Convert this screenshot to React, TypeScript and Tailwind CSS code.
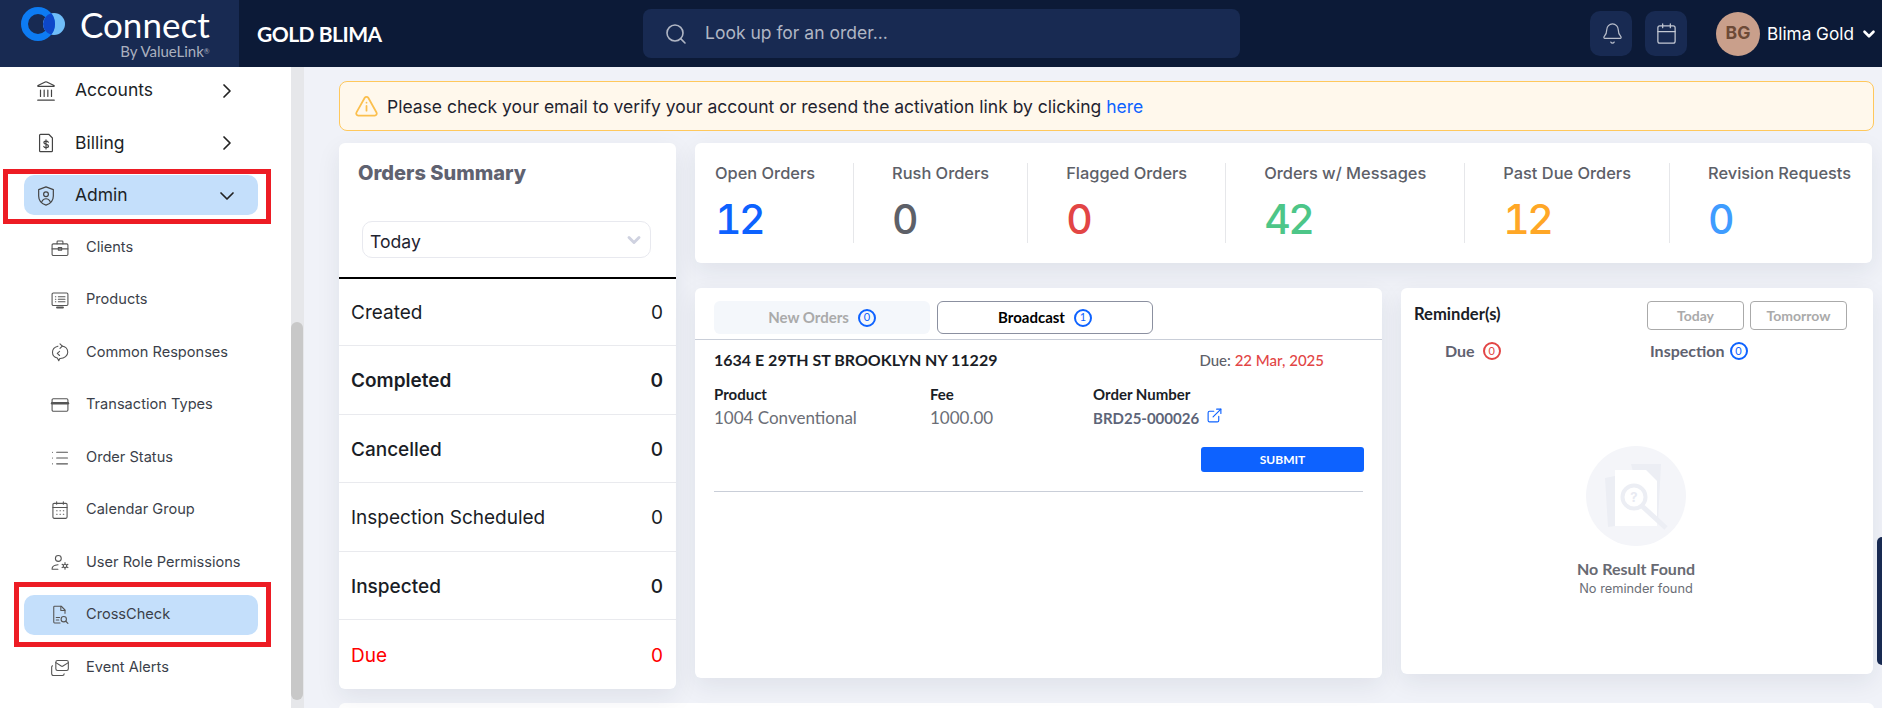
import { Bell, Calendar, ChevronDown, ChevronRight, ExternalLink, Landmark, List, Search, Mails } from "lucide-react";

type IconProps = { className?: string };

// small hand drawn menu icons, the ones the icon package has no close match for
function Svg({ children, className }: IconProps & { children: React.ReactNode }) {
  return (
    <svg viewBox="0 0 24 24" fill="none" stroke="currentColor" strokeWidth="1.3" strokeLinecap="round" strokeLinejoin="round" className={className}>
      {children}
    </svg>
  );
}

const BillingIcon = (p: IconProps) => (
  <Svg {...p}>
    <path d="M6 2.5h9l4 4v14a1 1 0 0 1-1 1H6a1 1 0 0 1-1-1v-17a1 1 0 0 1 1-1z" />
    <path d="M14.5 11.2c-.4-.8-1.3-1.2-2.4-1.2-1.4 0-2.4.7-2.4 1.8 0 2.4 5 1.1 5 3.5 0 1.1-1.1 1.8-2.5 1.800-1.200 0-2.200-.5-2.600-1.300M12 8.500v10" />
  </Svg>
);
const AdminIcon = (p: IconProps) => (
  <Svg {...p}>
    <path d="M12 2l8 3v7c0 5-3.500 8.500-8 10-4.500-1.500-8-5-8-10V5z" />
    <circle cx="12" cy="10" r="2.600" />
    <path d="M7.500 18c1-2 2.700-3 4.500-3s3.500 1 4.500 3" />
  </Svg>
);
const ClientsIcon = (p: IconProps) => (
  <Svg {...p}>
    <rect x="2.500" y="7" width="19" height="14" rx="1.500" />
    <path d="M8.500 7V4.500a1 1 0 0 1 1-1h5a1 1 0 0 1 1 1V7M2.500 13h19" />
    <rect x="10" y="11.500" width="4" height="3" />
  </Svg>
);
const ProductsIcon = (p: IconProps) => (
  <Svg {...p}>
    <rect x="2.500" y="3.500" width="19" height="15" rx="1.500" />
    <path d="M6.500 8h.5M6.500 11h.5M6.500 14h.5M10 8h8M10 11h8M10 14h8" />
    <path d="M8.500 21h7" strokeWidth="2.500" />
  </Svg>
);
const ResponsesIcon = (p: IconProps) => (
  <Svg {...p}>
    <path d="M9.500 3.800C5.800 4.600 3 7.500 3 11c0 3.400 2.500 6.200 5.800 7.100l1.700 3.200 1.300-2.800h.5c5 0 9-3.300 9-7.500 0-3.600-3-6.600-7-7.300" />
    <path d="M12 1l2.800 2.800L12 6.500M11.500 15l-2.800-2.500 2.800-2.500" />
  </Svg>
);
const CardIcon = (p: IconProps) => (
  <Svg {...p}>
    <rect x="2.500" y="4.500" width="19" height="15" rx="1.500" />
    <path d="M2.500 10h19" strokeWidth="3" />
  </Svg>
);
const CalendarGroupIcon = (p: IconProps) => (
  <Svg {...p}>
    <rect x="3.500" y="4" width="17" height="18" rx="1.500" />
    <path d="M3.500 9h17M8 2v3M16 2v3M8 13h.5M12 13h.5M16 13h.5M8 17h.5M12 17h.5M16 17h.5" />
  </Svg>
);
const UserRoleIcon = (p: IconProps) => (
  <Svg {...p}>
    <circle cx="10" cy="6.500" r="3.500" />
    <path d="M2.500 19c0-1 .3-4.500 7-5M2.500 19.500h7" />
    <circle cx="18" cy="15.500" r="2" />
    <path d="M18 11.500v1.500M18 18v1.500M14.500 13.500l1.300.8M20.200 16.700l1.300.8M14.500 17.500l1.300-.8M20.200 14.300l1.300-.8" />
  </Svg>
);
const CrossCheckIcon = (p: IconProps) => (
  <Svg {...p}>
    <path d="M12 21.500H5.500a1 1 0 0 1-1-1v-18a1 1 0 0 1 1-1h8l4.500 4.500v4" />
    <path d="M13 1.500V6.500h5M7.500 15h4M7.500 18h3" />
    <circle cx="16.500" cy="17" r="3.200" />
    <path d="M19 19.500l2.500 2.500" />
  </Svg>
);
const AlertInfoIcon = (p: IconProps) => (
  <svg viewBox="0 0 24 24" fill="none" stroke="currentColor" strokeWidth="1.700" strokeLinecap="round" strokeLinejoin="round" className={p.className}>
    <path d="M10.300 3.600L2.400 17.700A2 2 0 0 0 4.100 20.700h15.800a2 2 0 0 0 1.700-3L13.700 3.600a2 2 0 0 0-3.400 0z" />
    <path d="M12 11.500v4.500M12 8.300h.01" />
  </svg>
);

const menu = [
  { label: "Accounts", icon: Landmark, main: true, chevron: "right" },
  { label: "Billing", icon: BillingIcon, main: true, chevron: "right" },
  { label: "Admin", icon: AdminIcon, main: true, chevron: "down", active: true },
  { label: "Clients", icon: ClientsIcon },
  { label: "Products", icon: ProductsIcon },
  { label: "Common Responses", icon: ResponsesIcon },
  { label: "Transaction Types", icon: CardIcon },
  { label: "Order Status", icon: List },
  { label: "Calendar Group", icon: CalendarGroupIcon },
  { label: "User Role Permissions", icon: UserRoleIcon },
  { label: "CrossCheck", icon: CrossCheckIcon, active: true },
  { label: "Event Alerts", icon: Mails },
];

const summary = [
  { label: "Created", weight: "font-normal" },
  { label: "Completed", weight: "font-semibold" },
  { label: "Cancelled", weight: "font-medium" },
  { label: "Inspection Scheduled", weight: "font-normal" },
  { label: "Inspected", weight: "font-medium" },
  { label: "Due", weight: "font-normal", red: true },
];

const stats = [
  { label: "Open Orders", value: "12", color: "text-[#0d62ff]" },
  { label: "Rush Orders", value: "0", color: "text-[#5d6068]" },
  { label: "Flagged Orders", value: "0", color: "text-[#e24545]" },
  { label: "Orders w/ Messages", value: "42", color: "text-[#4dc688]" },
  { label: "Past Due Orders", value: "12", color: "text-[#ffa726]" },
  { label: "Revision Requests", value: "0", color: "text-[#3f9cff]" },
];

function Sidebar() {
  return (
    <aside className="relative w-[291px] shrink-0 overflow-hidden bg-white">
      <ul className="flex flex-col gap-[12.5px] pt-[3px]">
        {menu.map((item) => {
          const Icon = item.icon;
          return (
            <li
              key={item.label}
              className={`ml-[24px] flex h-[40px] w-[234px] shrink-0 items-center rounded-[10px] ${item.active ? "bg-[#c4dffb]" : ""} ${item.main ? "pl-[11px] pt-[1px] text-[17.5px] text-[#1c1f27]" : "pl-[26px] text-[14.6px] text-[#3b3f4a]"}`}
            >
              <Icon className={`shrink-0 ${item.main ? "h-[22px] w-[22px] text-[#444]" : "h-[20px] w-[20px] text-[#555]"}`} strokeWidth={1.3} />
              <span className={item.main ? "ml-[18px]" : "ml-[16px]"}>{item.label}</span>
              {item.chevron === "right" && <ChevronRight className="ml-auto mr-[19px] h-[24px] w-[24px] text-[#222]" strokeWidth={1.7} />}
              {item.chevron === "down" && <ChevronDown className="ml-auto mr-[19px] h-[24px] w-[24px] text-[#222]" strokeWidth={1.7} />}
            </li>
          );
        })}
      </ul>
      {/* red annotation boxes from the screenshot */}
      <div className="absolute left-[3px] top-[102px] h-[55px] w-[268px] border-[5px] border-[#ed1c24]" />
      <div className="absolute left-[14px] top-[515px] h-[65px] w-[257px] border-[5px] border-[#ed1c24]" />
    </aside>
  );
}

function Count({ n, red }: { n: number; red?: boolean }) {
  return (
    <span className={`inline-flex h-[18px] w-[18px] items-center justify-center rounded-full border-2 text-[11px] font-normal ${red ? "border-[#e24545] text-[#e24545]" : "border-[#0d62ff] text-[#0d62ff]"}`}>
      {n}
    </span>
  );
}

function EmptyArt() {
  return (
    <svg viewBox="0 0 100 100" className="h-[100px] w-[100px]">
      <circle cx="50" cy="50" r="50" fill="#f4f5f9" />
      <path d="M19 32l10-2v50l-7 1z" fill="#eceef4" />
      <path d="M45 18h30l-3 58H60z" fill="#eceef4" />
      <path d="M29 24h31l11 11v45H29z" fill="#fff" />
      <circle cx="48" cy="51" r="11.500" fill="#fff" stroke="#eceef4" strokeWidth="4" />
      <path d="M56 60l24 22" stroke="#eceef4" strokeWidth="5" />
      <text x="48" y="56" textAnchor="middle" fontSize="13" fontWeight="700" fill="#e8eaf2" fontFamily="Inter">?</text>
    </svg>
  );
}

export default function App() {
  return (
    <div className="relative flex h-[708px] w-[1882px] flex-col overflow-hidden bg-[#f0f2f8] font-['Inter',sans-serif]">
      <header className="flex h-[67px] shrink-0 items-center bg-[#0c1a37]">
        <div className="relative flex h-full w-[239px] shrink-0 bg-[#182a52] pl-[21px]">
          <svg viewBox="0 0 46 36" className="mt-[6px] h-[36px] w-[46px]">
            <circle cx="33" cy="18" r="11" fill="#6fbdf8" />
            <circle cx="17" cy="18" r="13.500" fill="none" stroke="#0d7bf2" strokeWidth="7" />
            <path d="M30.250 7.350A17 17 0 0 1 30.250 28.650A11 11 0 0 1 30.250 7.350z" fill="#0d47c9" />
          </svg>
          <div className="ml-[13px] flex flex-col items-end font-['Lato',sans-serif] text-white">
            <span className="mt-[4px] text-[35px] leading-[40px]">Connect</span>
            <span className="mt-[-1px] text-[15px] leading-[16px] text-[#aab0bf]">By ValueLink<sup className="text-[7px]">®</sup></span>
          </div>
        </div>
        <div className="ml-[18px] w-[386px] shrink-0 font-['Lato',sans-serif] text-[21px] font-bold tracking-[-0.5px] text-white">GOLD BLIMA</div>
        <div className="flex h-[49px] w-[597px] shrink-0 items-center rounded-[8px] bg-[#182a52] pl-[21px] text-[17.5px] text-[#b0b6c4]">
          <Search className="h-[24px] w-[24px]" strokeWidth={1.6} />
          <span className="ml-[17px]">Look up for an order...</span>
        </div>
        <button className="ml-[350px] flex h-[45px] w-[42px] items-center justify-center rounded-[10px] bg-[#182a52] pl-[2px] text-[#b8bdca]">
          <Bell className="h-[23px] w-[23px]" strokeWidth={1.3} />
        </button>
        <button className="ml-[13px] flex h-[45px] w-[42px] items-center justify-center rounded-[10px] bg-[#182a52] pl-[1px] text-[#c3c8d3]">
          <Calendar className="h-[23px] w-[23px]" strokeWidth={1.3} />
        </button>
        <div className="ml-[29px] flex h-[44px] w-[44px] items-center justify-center rounded-full bg-[#c99f8b] text-[17.6px] font-bold text-[#6d4a37]">BG</div>
        <span className="ml-[7px] text-[17.2px] text-white">Blima Gold</span>
        <ChevronDown className="ml-[6px] h-[18px] w-[18px] text-white" strokeWidth={3.5} />
      </header>

      <div className="flex min-h-0 flex-1">
        <Sidebar />
        {/* sidebar scrollbar */}
        <div className="w-[13px] shrink-0 bg-[#e6e7ea] pt-[255px]">
          <div className="h-[378px] w-[12px] rounded-[6px] bg-[#c8c8c8]" />
        </div>

        <main className="min-w-0 flex-1 pl-[35px] pr-[8px] pt-[14px]">
          <div className="flex h-[50px] items-center rounded-[8px] border border-[#ffc85c] bg-[#fff8ec] pl-[14px] text-[17.5px] text-[#1f2430]">
            <AlertInfoIcon className="h-[25px] w-[25px] text-[#fbbf4d]" />
            <span className="ml-[8px] pt-[2px]">
              Please check your email to verify your account or resend the activation link by clicking <span className="text-[#0d62ff]">here</span>
            </span>
          </div>

          <div className="mt-[12px] flex gap-[19px]">
            <section className="h-[546px] w-[337px] shrink-0 rounded-[6px] bg-white shadow-[0_8px_24px_rgba(30,40,70,0.08)]">
              <h2 className="pl-[19px] pt-[15px] text-[20px] font-extrabold leading-[30px] text-[#5f6270]">Orders Summary</h2>
              <div className="ml-[23px] mt-[33px] flex h-[37px] w-[289px] items-center justify-between rounded-[10px] border border-[#e8e9ef] pl-[7px] pr-[6px] text-[17.6px] text-[#1f2430]">
                <span className="pt-[5px]">Today</span>
                <ChevronDown className="h-[20px] w-[20px] text-[#cfd2e0]" strokeWidth={3.5} />
              </div>
              <div className="mt-[19px] border-t-2 border-black">
                {summary.map((row) => (
                  <div
                    key={row.label}
                    className={`flex h-[68.600px] items-center justify-between border-b border-[#e9eaee] pl-[12px] pr-[13px] pt-[3px] text-[19px] first:h-[67px] last:border-b-0 ${row.weight} ${row.red ? "text-[#ff0000]" : "text-[#1a1d26]"}`}
                  >
                    <span>{row.label}</span>
                    <span>0</span>
                  </div>
                ))}
              </div>
            </section>

            <div className="min-w-0 flex-1">
              <section className="mr-[2px] flex h-[120px] items-center rounded-[6px] bg-white pl-[20px] shadow-[0_8px_24px_rgba(30,40,70,0.08)]">
                {stats.map((s, i) => (
                  <div key={s.label} className={`flex h-[80px] flex-col ${i < 5 ? "mr-[38px] border-r border-[#e6e7ea] pr-[38px]" : ""}`}>
                    <span className="whitespace-nowrap text-[16.4px] font-medium leading-[20px] text-[#5d6068]">{s.label}</span>
                    <span className={`mt-[11px] text-[41px] font-medium tabular-nums leading-[50px] tracking-[-2.5px] ${s.color}`}>{s.value}</span>
                  </div>
                ))}
              </section>

              <div className="mt-[25px] flex items-start gap-[19px]">
                <section className="h-[390px] w-[687px] shrink-0 rounded-[6px] bg-white font-['Lato',sans-serif] shadow-[0_8px_24px_rgba(30,40,70,0.08)]">
                  <div className="flex h-[52px] gap-[7px] border-b border-[#c9ced8] pl-[19px] pt-[13px]">
                    <div className="flex h-[33px] w-[216px] items-center justify-center gap-[9px] rounded-[6px] bg-[#f4f7fb] text-[15px] font-bold text-[#aaaaaa]">
                      New Orders <Count n={0} />
                    </div>
                    <div className="flex h-[33px] w-[216px] items-center justify-center gap-[9px] rounded-[6px] border border-[#8b90a0] text-[15px] font-bold text-black">
                      Broadcast <Count n={1} />
                    </div>
                  </div>
                  <div className="relative mx-[19px] h-[152px] border-b border-[#c9ced8]">
                    <div className="flex items-center justify-between pr-[39px] pt-[8px]">
                      <span className="text-[16px] font-bold text-[#1a1d26]">1634 E 29TH ST BROOKLYN NY 11229</span>
                      <span className="text-[15px] font-medium text-[#5d6068]">
                        Due: <span className="text-[#e24545]">22 Mar, 2025</span>
                      </span>
                    </div>
                    <div className="mt-[11px] flex text-[15px]">
                      <div className="w-[216px]">
                        <div className="font-bold text-[#1a1d26]">Product</div>
                        <div className="mt-[-1px] text-[17px] text-[#6b6e76]">1004 Conventional</div>
                      </div>
                      <div className="w-[163px]">
                        <div className="font-bold text-[#1a1d26]">Fee</div>
                        <div className="mt-[-1px] text-[17px] text-[#6b6e76]">1000.00</div>
                      </div>
                      <div>
                        <div className="font-bold text-[#1a1d26]">Order Number</div>
                        <div className="mt-[1px] flex items-center gap-[7px] text-[15px] font-bold text-[#5d6478]">
                          BRD25-000026 <ExternalLink className="mb-[4px] h-[17px] w-[17px] text-[#0d62ff]" strokeWidth={1.6} />
                        </div>
                      </div>
                    </div>
                    <button className="absolute bottom-[19px] right-[-1px] h-[25px] w-[163px] rounded-[3px] bg-[#0d62ff] text-[12px] font-bold text-white">SUBMIT</button>
                  </div>
                </section>

                <section className="flex h-[386px] w-[472px] shrink-0 flex-col rounded-[6px] bg-white font-['Lato',sans-serif] shadow-[0_8px_24px_rgba(30,40,70,0.08)]">
                  <div className="flex pl-[13px] pr-[26px] pt-[13px]">
                    <span className="text-[16.6px] font-bold leading-[26px] text-[#1a1d26]">Reminder(s)</span>
                    <div className="ml-auto flex gap-[6px]">
                      <div className="flex h-[29px] w-[97px] items-center justify-center rounded-[4px] border border-[#aaaaaa] pb-[1px] text-[14px] font-bold text-[#aaaaaa]">Today</div>
                      <div className="flex h-[29px] w-[97px] items-center justify-center rounded-[4px] border border-[#aaaaaa] pb-[1px] text-[14px] font-bold text-[#aaaaaa]">Tomorrow</div>
                    </div>
                  </div>
                  <div className="mt-[9px] flex text-[16px] font-bold text-[#5f6270]">
                    <div className="ml-[44px] flex w-[205px] items-center gap-[8px]">Due <Count n={0} red /></div>
                    <div className="flex items-center gap-[5px]">Inspection <Count n={0} /></div>
                  </div>
                  <div className="mt-[83px] flex flex-col items-center pr-[2px]">
                    <EmptyArt />
                    <div className="mt-[13px] text-[16px] font-bold leading-[20px] text-[#686a72]">No Result Found</div>
                    <div className="mt-[1px] font-['Inter',sans-serif] text-[12.800px] leading-[18px] text-[#6b6e76]">No reminder found</div>
                  </div>
                </section>
              </div>
            </div>
          </div>

          <div className="mt-[14px] h-[40px] rounded-[6px] bg-white" />
        </main>
      </div>

      {/* floating side tab cut off by the window edge */}
      <div className="absolute right-0 top-[537px] h-[128px] w-[5px] rounded-l-[10px] bg-[#182a52]" />
    </div>
  );
}
